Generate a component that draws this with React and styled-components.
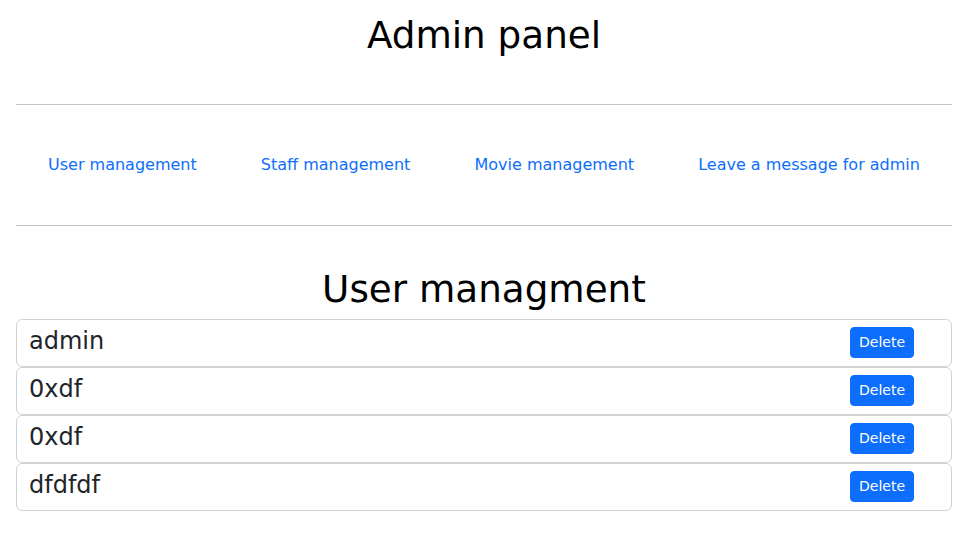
import React from "react";
import styled, { createGlobalStyle } from "styled-components";

const GlobalStyle = createGlobalStyle`
  body {
    margin: 0;
    background: #fff;
    color: #212529;
    font-family: "DejaVu Sans", "Liberation Sans", sans-serif;
  }
`;

const users = ["admin", "0xdf", "0xdf", "dfdfdf"];
const links = ["User management", "Staff management", "Movie management", "Leave a message for admin"];

function App() {
  return (
    <>
      <GlobalStyle />
      <Page>
        <Title>Admin panel</Title>
        <Divider />
        <Nav>
          {links.map(link => (
            <NavLink href="#" key={link}>
              {link}
            </NavLink>
          ))}
        </Nav>
        <Divider />
        <SectionTitle>User managment</SectionTitle>
        <UserList>
          {users.map((name, i) => (
            <UserCard key={i}>
              <UserName>{name}</UserName>
              <DeleteBtn>Delete</DeleteBtn>
            </UserCard>
          ))}
        </UserList>
      </Page>
    </>
  );
}

export default App;

const Page = styled.div`
  padding: 13px 16px 0;
`;
const Title = styled.h1`
  margin: 0 0 47px;
  font-size: 37.3px;
  font-weight: 400;
  line-height: 44px;
  text-align: center;
  color: #000;
`;
const Divider = styled.hr`
  margin: 0;
  border: 0;
  border-top: 1px solid rgba(33, 37, 41, 0.27);
`;
const Nav = styled.nav`
  display: flex;
  justify-content: space-around;
  padding: 40px 0 40px;
`;
const NavLink = styled.a`
  padding: 8px 16px;
  font-size: 16px;
  line-height: 24px;
  color: #0d6efd;
  text-decoration: none;
`;
const SectionTitle = styled.h2`
  margin: 41px 0 8px;
  font-size: 37.3px;
  font-weight: 400;
  line-height: 44px;
  text-align: center;
  color: #000;
`;
const UserList = styled.div`
  display: flex;
  flex-direction: column;
`;
const UserCard = styled.div`
  display: flex;
  justify-content: space-between;
  align-items: flex-start;
  padding: 7px 37px 8px 12px;
  border: 1px solid rgba(0, 0, 0, 0.175);
  border-radius: 6px;
`;
const UserName = styled.span`
  font-size: 24px;
  line-height: 29px;
  color: #212529;
`;
const DeleteBtn = styled.button`
  padding: 4px 8px;
  font-family: inherit;
  font-size: 14px;
  line-height: 21px;
  color: #fff;
  background: #0d6efd;
  border: 1px solid #0d6efd;
  border-radius: 4px;
  cursor: pointer;
`;
